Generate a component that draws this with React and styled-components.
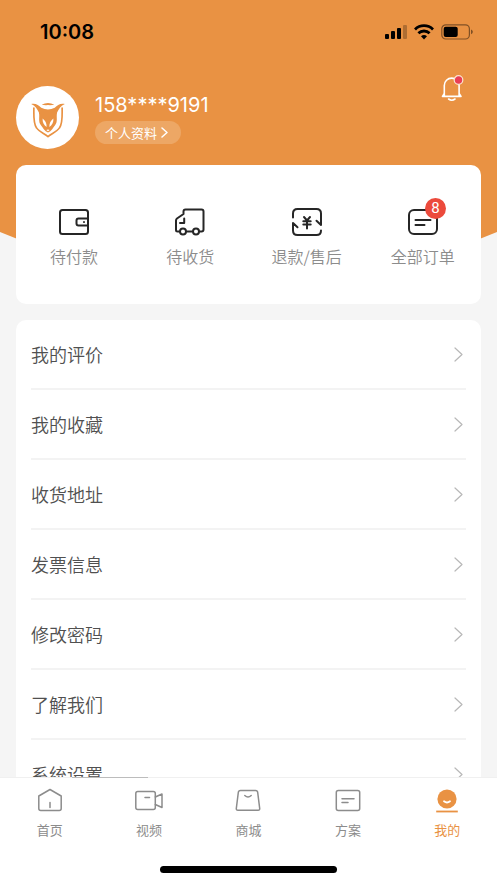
import { useState } from 'react';
import { styled, createGlobalStyle } from 'styled-components';

const GlobalStyle = createGlobalStyle`
  * {
    box-sizing: border-box;
  }

  body {
    margin: 0;
    background: #f5f5f5;
    font-family: 'Noto Sans CJK SC', sans-serif;
  }

  button {
    border: none;
    padding: 0;
    background: none;
    font-family: inherit;
    cursor: pointer;
  }

  a {
    color: inherit;
    text-decoration: none;
  }
`;

const Page = styled.div`
  height: 100vh;
  display: flex;
  flex-direction: column;
`;

const Content = styled.main`
  flex: 1;
  min-height: 0;
  overflow-y: auto;
  scrollbar-width: none;
`;

const Header = styled.header`
  height: 240px;
  background: #e99243;
  clip-path: polygon(
    0 0,
    100% 0,
    100% 232px,
    calc(100% - 20px) 100%,
    20px 100%,
    0 232px
  );
`;

const StatusBar = styled.div`
  height: 64px;
  padding: 0 23px 0 40px;
  display: flex;
  align-items: center;
  justify-content: space-between;
`;

const Time = styled.span`
  font-family: Inter, sans-serif;
  font-size: 20px;
  font-weight: 600;
  color: #000;
`;

const StatusIcons = styled.div`
  display: flex;
  align-items: center;
  gap: 7px;
`;

const Profile = styled.div`
  padding: 11px 33px 0 16px;
  display: flex;
  align-items: flex-start;
`;

const Avatar = styled.div`
  width: 63px;
  height: 63px;
  margin-top: 11px;
  padding-top: 6px;
  border-radius: 50%;
  background: #fff;
  display: flex;
  align-items: center;
  justify-content: center;
`;

const User = styled.div`
  flex: 1;
  margin: 16px 0 0 16px;
  display: flex;
  flex-direction: column;
  align-items: flex-start;
  gap: 2px;
`;

const Phone = styled.span`
  font-family: Inter, sans-serif;
  font-size: 20px;
  line-height: 28px;
  color: #fff;
`;

const ProfileButton = styled.button`
  height: 23px;
  padding: 0 13px 0 10px;
  border-radius: 12px;
  background: #eda765;
  display: flex;
  align-items: center;
  gap: 4px;
  color: #fff;
  font-size: 13px;
`;

const BellButton = styled.button`
  height: 27px;
`;

const Card = styled.section`
  position: relative;
  margin: 0 16px 16px;
  border-radius: 10px;
  background: #fff;
`;

const Orders = styled(Card)`
  height: 139px;
  margin-top: -75px;
  padding-top: 41px;
  display: grid;
  grid-template-columns: repeat(4, 1fr);
  align-items: start;
`;

const Order = styled.a`
  display: flex;
  flex-direction: column;
  align-items: center;
  gap: 6px;
  color: #8c8c8c;
  font-size: 16px;
  font-weight: 350;
  line-height: 24px;
`;

const OrderIcon = styled.span`
  position: relative;
  height: 32px;
`;

const Badge = styled.span`
  position: absolute;
  top: -8px;
  right: -7px;
  width: 21px;
  height: 21px;
  border-radius: 50%;
  background: #ec4a3c;
  color: #fff;
  font-family: Roboto, sans-serif;
  font-size: 15px;
  font-weight: 400;
  line-height: 21px;
  text-align: center;
`;

const Menu = styled(Card)`
  padding: 0 15px;
`;

const MenuItem = styled.a`
  height: 70px;
  padding-right: 3px;
  border-bottom: 2px solid #f3f3f3;
  display: flex;
  align-items: center;
  justify-content: space-between;
  color: #505050;
  font-size: 18px;
  font-weight: 350;
`;

const TabBar = styled.nav`
  position: relative;
  border-top: 1px solid #f0f0f0;
  background: #fff;
`;

const Progress = styled.span`
  position: absolute;
  top: -1px;
  left: 72px;
  width: 76px;
  height: 1px;
  background: #bcbcbc;
`;

const Tabs = styled.div`
  height: 88px;
  padding-top: 9px;
  display: grid;
  grid-template-columns: repeat(5, 1fr);
  align-items: start;
`;

const Tab = styled.button`
  display: flex;
  flex-direction: column;
  align-items: center;
  gap: 3px;
  color: ${({ $active }) => ($active ? '#e99243' : '#8c8c8c')};
  font-size: 13px;
  line-height: 20px;
`;

const HomeIndicator = styled.div`
  width: 177px;
  height: 7px;
  margin: 0 auto 10px;
  border-radius: 4px;
  background: #000;
`;

const Svg = styled.svg`
  display: block;
  fill: none;
  stroke-linecap: round;
  stroke-linejoin: round;
`;

const Icon = ({ width, height, children, stroke = 'currentColor', line = 2, view }) => (
  <Svg
    width={width}
    height={height}
    viewBox={view || `0 0 ${width} ${height}`}
    stroke={stroke}
    strokeWidth={line}
    aria-hidden="true"
  >
    {children}
  </Svg>
);

const SignalIcon = () => (
  <Icon width={22} height={16} stroke="none">
    <g fill="#000">
      <rect x="0" y="10" width="4" height="5" rx="1" />
      <rect x="6" y="7" width="4" height="8" rx="1" />
      <rect x="12" y="4" width="4" height="11" rx="1" />
      <rect x="18" y="1" width="4" height="14" rx="1" opacity="0.25" />
    </g>
  </Icon>
);

const WifiIcon = () => (
  <Icon width={20} height={16} stroke="#000" line={2.8}>
    <path d="M1 5.400a12.800 12.800 0 0 1 18 0" strokeLinecap="butt" />
    <path d="M4.400 9.300a8 8 0 0 1 11.200 0" strokeLinecap="butt" />
    <path d="M7 12.300a4.600 4.600 0 0 1 6 0L10 15.500z" fill="#000" stroke="none" />
  </Icon>
);

const BatteryIcon = () => (
  <Icon width={33} height={16} line={1.2}>
    <rect x="0.8" y="0.8" width="27.6" height="14.2" rx="4" stroke="#000" opacity="0.45" />
    <rect x="2.7" y="2.8" width="14" height="10.2" rx="2" fill="#000" stroke="none" />
    <path d="M30 5.6c2.4.8 2.4 3.8 0 4.6z" fill="#000" stroke="none" opacity="0.45" />
  </Icon>
);

const LogoIcon = () => (
  <Icon width={34} height={35} view="0 0 100 104" stroke="none">
    <path
      d="M0 3C14 0 22 7 30 14Q50 24 70 14C78 7 86 0 100 3 88 8 82 18 77 28 74 42 80 55 71 66 66 72 60 84 50 88 40 84 34 72 29 66 20 55 26 42 23 28 18 18 12 8 0 3z"
      fill="#e99243"
    />
    <path d="M31 5q19-10 38 0-10 2-19 1-9 1-19-1z" fill="#e99243" />
    <path
      d="M8 15C8 40 6 60 16 74 24 86 40 91 50 100 60 91 76 86 84 74 94 60 92 40 92 15"
      stroke="#e99243"
      strokeWidth="5"
    />
    <path
      d="M34 46c-1 12 4 20 12 25 0-11-4-19-12-25zM66 46c1 12-4 20-12 25 0-11 4-19 12-25zM45 80q5-2 10 0l-5 4z"
      fill="#fff"
    />
  </Icon>
);

const BellIcon = () => (
  <Icon width={23} height={27} stroke="#fff" line={1.6}>
    <path d="M1.500 21.400h18.500M3.300 20.500V10.500a7.400 7.400 0 0 1 14.800 0v10M3.300 18.500l-1.800 2.900M18.100 18.500l1.900 2.900M7.600 24q3.200 2.400 6.400 0" />
    <circle cx="17.500" cy="5" r="4.300" fill="#ea3f55" stroke="#fbe3cf" strokeWidth="1.200" />
  </Icon>
);

const ChevronIcon = ({ width = 9, height = 15, stroke = '#b8b8b8', line = 1.2 }) => (
  <Icon width={width} height={height} stroke={stroke} line={line}>
    <path d={`M1 1l${width - 2} ${height / 2 - 1}L1 ${height - 1}`} />
  </Icon>
);

const WalletIcon = () => (
  <Icon width={32} height={32} stroke="#262626">
    <rect x="2" y="4" width="28" height="24" rx="2.5" />
    <path d="M30 12.500H20.500q-2 0-2 2v3q0 2 2 2H30" />
    <path d="M26 15.800v.4" strokeWidth="1.800" />
  </Icon>
);

const TruckIcon = () => (
  <Icon width={32} height={32} stroke="#262626">
    <path d="M5.500 25.500H3.500q-1.500 0-1.500-1.500V14.500q0-1.200 1-2L9.500 8V5.500Q9.500 3.500 11.500 3.500h16q2 0 2 2V23.500q0 2-2 2H25.500M12.500 25.500h6" />
    <path d="M10.200 12.500v4.500H6" />
    <circle cx="9" cy="25.500" r="3" />
    <circle cx="22" cy="25.500" r="3" />
  </Icon>
);

const RefundIcon = () => (
  <Icon width={32} height={32} stroke="#262626">
    <path d="M2 11.500V7.500Q2 3 6.500 3h19Q30 3 30 7.500V19L25.500 14.800" />
    <path d="M30 24.500Q30 29 25.500 29h-19Q2 29 2 24.500V17l4.500 4.200" />
    <path d="M13 11l3 3.500 3-3.500M12.300 15.200h7.400M12.300 18.500h7.400M16 15v7.500" />
  </Icon>
);

const ListIcon = () => (
  <Icon width={32} height={32} stroke="#262626">
    <rect x="2" y="4" width="28" height="24" rx="5" />
    <path d="M8.500 14h15M8.500 19h9" />
  </Icon>
);

const HomeIcon = () => (
  <Icon width={28} height={30} line={1.5}>
    <path d="M2.800 9L14 2.500 25.200 9V21.500q0 2-2 2H4.800q-2 0-2-2zM14 15.500v5" />
  </Icon>
);

const VideoIcon = () => (
  <Icon width={28} height={30} line={1.5}>
    <rect x="0.800" y="4.500" width="19.500" height="18" rx="2" />
    <path d="M20.300 10l6.700-3v13.500l-6.700-3M10 10.500h4.500" />
  </Icon>
);

const ShopIcon = () => (
  <Icon width={28} height={30} line={1.5}>
    <path d="M6.500 3.500h15q2 0 2.200 2L25.700 21.500q.2 1.700-1.600 1.700H3.900q-1.800 0-1.600-1.700L4.300 5.500q.2-2 2.200-2z" />
    <path d="M10.800 8.500q3.200 3 6.400 0" />
  </Icon>
);

const PlanIcon = () => (
  <Icon width={28} height={30} line={1.5}>
    <rect x="2.300" y="3.500" width="23.400" height="20" rx="2" />
    <path d="M8 11.800h12M8 15.600h6" />
  </Icon>
);

const MineIcon = () => (
  <Icon width={28} height={30} line={1.8}>
    <circle cx="14" cy="12" r="9.600" fill="currentColor" stroke="none" />
    <path d="M11 14.300q3 2.500 6 0" stroke="#fff" />
    <path d="M3.200 24.500h21.600" strokeLinecap="butt" />
  </Icon>
);

const orders = [
  { label: '待付款', icon: WalletIcon },
  { label: '待收货', icon: TruckIcon },
  { label: '退款/售后', icon: RefundIcon },
  { label: '全部订单', icon: ListIcon, count: 8 },
];

const menu = ['我的评价', '我的收藏', '收货地址', '发票信息', '修改密码', '了解我们', '系统设置'];

const tabs = [
  { label: '首页', icon: HomeIcon },
  { label: '视频', icon: VideoIcon },
  { label: '商城', icon: ShopIcon },
  { label: '方案', icon: PlanIcon },
  { label: '我的', icon: MineIcon },
];

const App = () => {
  const [active, setActive] = useState('我的');

  return (
    <Page>
      <GlobalStyle />
      <Content>
        <Header>
          <StatusBar>
            <Time>10:08</Time>
            <StatusIcons>
              <SignalIcon />
              <WifiIcon />
              <BatteryIcon />
            </StatusIcons>
          </StatusBar>
          <Profile>
            <Avatar>
              <LogoIcon />
            </Avatar>
            <User>
              <Phone>158****9191</Phone>
              <ProfileButton>
                个人资料
                <ChevronIcon width={7} height={11} stroke="#fff" line={1.5} />
              </ProfileButton>
            </User>
            <BellButton aria-label="消息">
              <BellIcon />
            </BellButton>
          </Profile>
        </Header>
        <Orders>
          {orders.map(({ label, icon: Glyph, count }) => (
            <Order href="#" key={label}>
              <OrderIcon>
                <Glyph />
                {count && <Badge>{count}</Badge>}
              </OrderIcon>
              {label}
            </Order>
          ))}
        </Orders>
        <Menu>
          {menu.map((label) => (
            <MenuItem href="#" key={label}>
              {label}
              <ChevronIcon />
            </MenuItem>
          ))}
        </Menu>
      </Content>
      <TabBar>
        <Progress />
        <Tabs>
          {tabs.map(({ label, icon: Glyph }) => (
            <Tab key={label} $active={active === label} onClick={() => setActive(label)}>
              <Glyph />
              {label}
            </Tab>
          ))}
        </Tabs>
        <HomeIndicator />
      </TabBar>
    </Page>
  );
};

export default App;
